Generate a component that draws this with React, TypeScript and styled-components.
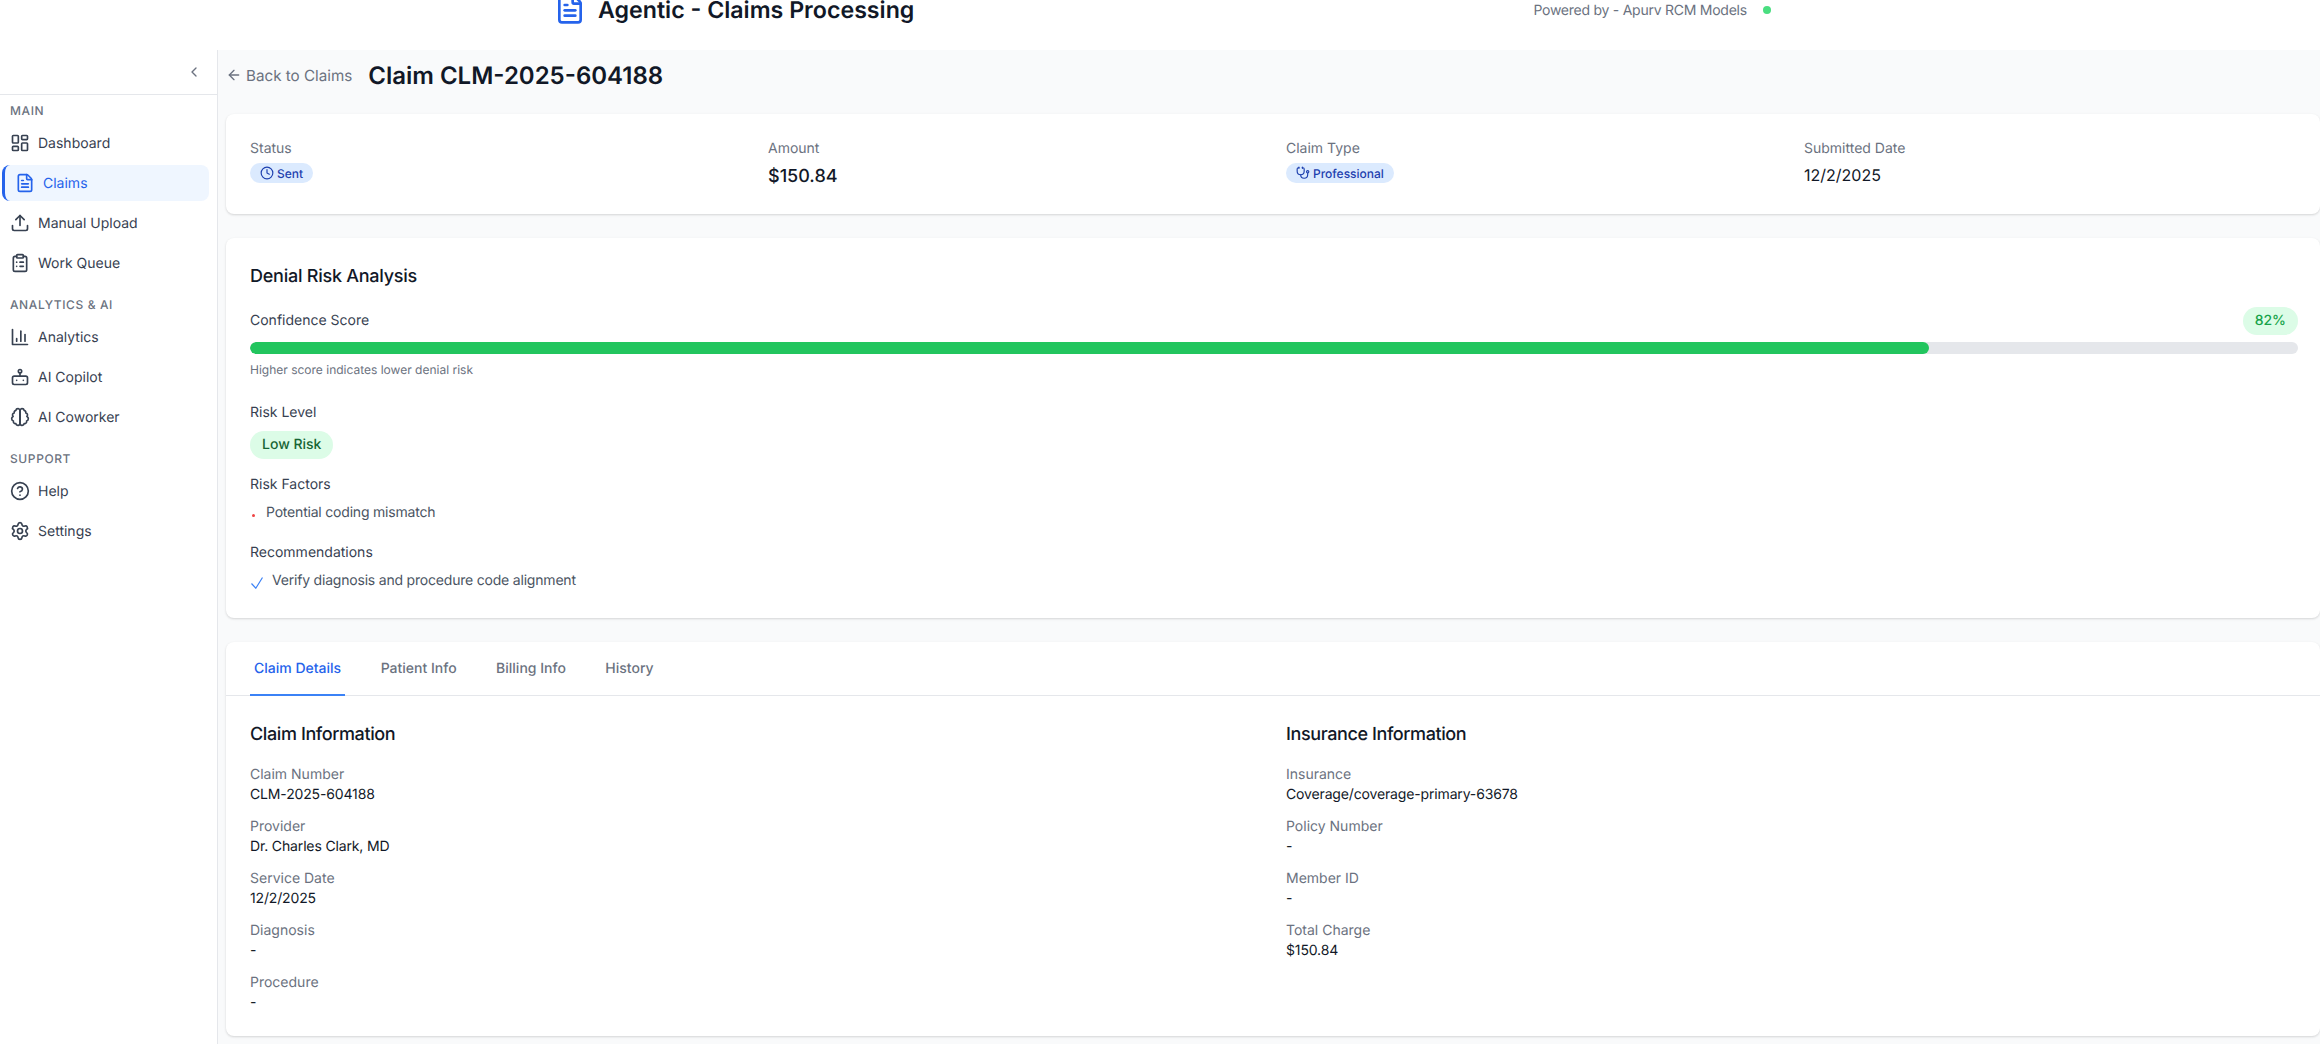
import styled, { createGlobalStyle } from 'styled-components';
import {
  ArrowLeft,
  ChevronLeft,
  CircleHelp,
  ClipboardList,
  Clock,
  FileText,
  LayoutDashboard,
  Settings,
  Stethoscope,
  Upload,
} from 'lucide-react';

const GlobalStyle = createGlobalStyle`
  * {
    box-sizing: border-box;
  }

  html,
  body {
    margin: 0;
    height: 100%;
    overflow: hidden;
    background: #fff;
    font-family: Inter, 'Liberation Sans', sans-serif;
    color: #111827;
    text-rendering: geometricPrecision;
  }
`;

const Page = styled.div`
  display: flex;
  flex-direction: column;
  height: 1044px;
  width: 2320px;
  overflow: hidden;
`;

const Header = styled.header`
  background: #fff;
  display: flex;
  flex-shrink: 0;
  height: 50px;
  overflow: hidden;
  padding-left: 554px;
`;

const Brand = styled.div`
  align-items: center;
  color: #2563eb;
  display: flex;
  gap: 12px;
  height: 44px;
  margin-top: -13px;
`;

const BrandTitle = styled.h1`
  color: #111827;
  font-size: 23.2px;
  font-weight: 600;
  line-height: 18px;
  margin: 0;
  padding-top: 2px;
`;

const Powered = styled.div`
  align-items: center;
  color: #6b7280;
  display: flex;
  font-size: 14px;
  gap: 16px;
  height: 20px;
  letter-spacing: -0.25px;
  margin-left: 619px;
`;

const StatusDot = styled.span`
  background: #4ade80;
  border-radius: 50%;
  height: 8px;
  width: 8px;
`;

const Body = styled.div`
  display: flex;
  flex: 1;
  min-height: 0;
`;

const Sidebar = styled.aside`
  background: #fff;
  border-right: 1px solid #e5e7eb;
  flex-shrink: 0;
  width: 218px;
`;

const CollapseRow = styled.div`
  align-items: center;
  border-bottom: 1px solid #e5e7eb;
  color: #6b7280;
  display: flex;
  height: 45px;
  justify-content: flex-end;
  padding-right: 15px;
`;

const NavSection = styled.div`
  padding: 8px 0 4px;
`;

const SectionTitle = styled.div`
  color: #6b7280;
  font-size: 12px;
  font-weight: 500;
  letter-spacing: 0.6px;
  line-height: 16px;
  margin-bottom: 6px;
  padding: 0 10px;
`;

const NavItem = styled.a<{ $active?: boolean }>`
  align-items: center;
  background: ${({ $active }) => ($active ? '#eff6ff' : 'transparent')};
  border-left: ${({ $active }) => ($active ? '3px solid #2563eb' : '0')};
  border-radius: 8px;
  color: ${({ $active }) => ($active ? '#2563eb' : '#374151')};
  display: flex;
  font-size: 14px;
  gap: 8px;
  height: 36px;
  margin: 0 8px 4px ${({ $active }) => ($active ? '2px' : '0')};
  padding-left: 10px;
`;

const Main = styled.main`
  background: #f9fafb;
  flex: 1;
  min-width: 0;
  padding-left: 8px;
`;

const TitleRow = styled.div`
  align-items: center;
  display: flex;
  gap: 16px;
  height: 50px;
  margin-bottom: 14px;
`;

const BackLink = styled.a`
  align-items: center;
  color: #6b7280;
  display: flex;
  font-size: 15.2px;
  gap: 4px;
`;

const ClaimTitle = styled.h2`
  color: #111827;
  font-size: 24px;
  font-weight: 600;
  margin: 0;
`;

const Card = styled.section`
  background: #fff;
  border-radius: 8px;
  box-shadow: 0 1px 3px rgba(0, 0, 0, 0.1), 0 1px 2px rgba(0, 0, 0, 0.06);
  margin-bottom: 24px;
`;

const SummaryCard = styled(Card)`
  display: grid;
  gap: 24px;
  grid-template-columns: repeat(4, 1fr);
  height: 100px;
  padding: 25px 22px 23px 24px;
`;

const SummaryLabel = styled.div`
  color: #6b7280;
  font-size: 14px;
  line-height: 20px;
`;

const SummaryValue = styled.div<{ $large?: boolean }>`
  color: #111827;
  font-size: ${({ $large }) => ($large ? '18px' : '16px')};
  font-weight: ${({ $large }) => ($large ? 500 : 400)};
  line-height: ${({ $large }) => ($large ? '28px' : '24px')};
  margin-top: 4px;
`;

const Pill = styled.span`
  align-items: center;
  background: #dbeafe;
  border-radius: 10px;
  color: #1e40af;
  display: inline-flex;
  font-size: 12px;
  font-weight: 500;
  gap: 3px;
  height: 20px;
  margin-top: 4px;
  padding: 0 10px;
`;

const RiskCard = styled(Card)`
  height: 380px;
  padding: 25px 22px 24px 24px;
`;

const CardTitle = styled.h3`
  color: #111827;
  font-size: 18px;
  font-weight: 500;
  letter-spacing: -0.25px;
  line-height: 28px;
  margin: 0 0 16px;
`;

const ScoreRow = styled.div`
  align-items: center;
  display: flex;
  justify-content: space-between;
`;

const FieldHeading = styled.div`
  color: #374151;
  font-size: 14px;
  line-height: 20px;
`;

const ScoreBadge = styled.span`
  background: #dcfce7;
  border-radius: 14px;
  color: #16a34a;
  font-size: 14px;
  font-weight: 500;
  line-height: 28px;
  padding: 0 12px;
`;

const Track = styled.div`
  background: #e5e7eb;
  border-radius: 6px;
  height: 12px;
  margin-top: 7px;
  overflow: hidden;
`;

const Fill = styled.div`
  background: #22c55e;
  border-radius: 6px;
  height: 100%;
`;

const Hint = styled.div`
  color: #6b7280;
  font-size: 12px;
  line-height: 16px;
  margin: 8px 0 25px;
`;

const RiskBadge = styled.span`
  background: #dcfce7;
  border-radius: 14px;
  color: #166534;
  display: inline-block;
  font-size: 14px;
  font-weight: 500;
  line-height: 28px;
  margin: 8px 0 16px;
  padding: 0 12px;
`;

const ListRow = styled.div`
  align-items: center;
  color: #4b5563;
  display: flex;
  font-size: 14px;
  letter-spacing: -0.2px;
  line-height: 20px;
  margin: 8px 0 20px;
`;

const Bullet = styled.span`
  background: #ef4444;
  border-radius: 50%;
  height: 3px;
  margin: 5px 11px 0 2px;
  width: 3px;
`;

const CheckMark = styled.svg`
  color: #3b82f6;
  flex-shrink: 0;
  margin: 4px 9px 0 1px;
`;

const TabBar = styled.div`
  border-bottom: 1px solid #e5e7eb;
  display: flex;
  gap: 31.5px;
  height: 54px;
  padding-left: 24px;
`;

const Tab = styled.div<{ $active?: boolean }>`
  align-items: center;
  border-bottom: 2px solid ${({ $active }) => ($active ? '#3b82f6' : 'transparent')};
  color: ${({ $active }) => ($active ? '#2563eb' : '#6b7280')};
  display: flex;
  font-size: 14px;
  font-weight: 500;
  height: 54px;
  padding: 0 4px;
`;

const DetailGrid = styled.div`
  display: grid;
  gap: 24px;
  grid-template-columns: 1fr 1fr;
  padding: 25px 22px 23px 24px;
`;

const SectionHeading = styled.h4`
  color: #111827;
  font-size: 18px;
  font-weight: 500;
  letter-spacing: -0.4px;
  line-height: 28px;
  margin: 0 0 16px;
`;

const Field = styled.div`
  margin-bottom: 12px;

  &:last-child {
    margin-bottom: 0;
  }
`;

const FieldLabel = styled.div`
  color: #6b7280;
  font-size: 14px;
  line-height: 20px;
`;

const FieldValue = styled.div`
  color: #111827;
  font-size: 14px;
  letter-spacing: -0.15px;
  line-height: 20px;
`;

const navIconProps = {
  width: 20,
  height: 20,
  viewBox: '0 0 24 24',
  fill: 'none',
  stroke: 'currentColor',
  strokeWidth: 2,
  strokeLinecap: 'round' as const,
  strokeLinejoin: 'round' as const,
};

const AnalyticsIcon = () => (
  <svg {...navIconProps}>
    <path d="M3 3v18h18" />
    <path d="M18 17V9" />
    <path d="M13 17V5" />
    <path d="M8 17v-3" />
  </svg>
);

const CopilotIcon = () => (
  <svg {...navIconProps}>
    <rect x="3" y="11" width="18" height="10" rx="2" />
    <circle cx="12" cy="5" r="2" />
    <path d="M12 7v4" />
    <path d="M8 16h.01" />
    <path d="M16 16h.01" />
  </svg>
);

const CoworkerIcon = () => (
  <svg {...navIconProps}>
    <path d="M9.5 2A2.5 2.5 0 0 1 12 4.5v15a2.5 2.5 0 0 1-4.96.44 2.5 2.5 0 0 1-2.96-3.08 3 3 0 0 1-.34-5.58 2.5 2.5 0 0 1 1.32-4.24 2.5 2.5 0 0 1 1.98-3A2.5 2.5 0 0 1 9.5 2Z" />
    <path d="M14.5 2A2.5 2.5 0 0 0 12 4.5v15a2.5 2.5 0 0 0 4.96.44 2.5 2.5 0 0 0 2.96-3.08 3 3 0 0 0 .34-5.58 2.5 2.5 0 0 0-1.32-4.24 2.5 2.5 0 0 0-1.98-3A2.5 2.5 0 0 0 14.5 2Z" />
  </svg>
);

const claimFields = [
  ['Claim Number', 'CLM-2025-604188'],
  ['Provider', 'Dr. Charles Clark, MD'],
  ['Service Date', '12/2/2025'],
  ['Diagnosis', '-'],
  ['Procedure', '-'],
];

const insuranceFields = [
  ['Insurance', 'Coverage/coverage-primary-63678'],
  ['Policy Number', '-'],
  ['Member ID', '-'],
  ['Total Charge', '$150.84'],
];

const App = () => {
  return (
    <Page>
      <GlobalStyle />
      <Header>
        <Brand>
          <FileText size={32} />
          <BrandTitle>Agentic - Claims Processing</BrandTitle>
        </Brand>
        <Powered>
          Powered by - Apurv RCM Models
          <StatusDot />
        </Powered>
      </Header>
      <Body>
        <Sidebar>
          <CollapseRow>
            <ChevronLeft size={16} />
          </CollapseRow>
          <NavSection>
            <SectionTitle>MAIN</SectionTitle>
            <NavItem><LayoutDashboard size={20} />Dashboard</NavItem>
            <NavItem $active><FileText size={20} />Claims</NavItem>
            <NavItem><Upload size={20} />Manual Upload</NavItem>
            <NavItem><ClipboardList size={20} />Work Queue</NavItem>
          </NavSection>
          <NavSection>
            <SectionTitle>ANALYTICS &amp; AI</SectionTitle>
            <NavItem><AnalyticsIcon />Analytics</NavItem>
            <NavItem><CopilotIcon />AI Copilot</NavItem>
            <NavItem><CoworkerIcon />AI Coworker</NavItem>
          </NavSection>
          <NavSection>
            <SectionTitle>SUPPORT</SectionTitle>
            <NavItem><CircleHelp size={20} />Help</NavItem>
            <NavItem><Settings size={20} />Settings</NavItem>
          </NavSection>
        </Sidebar>
        <Main>
          <TitleRow>
            <BackLink><ArrowLeft size={16} />Back to Claims</BackLink>
            <ClaimTitle>Claim CLM-2025-604188</ClaimTitle>
          </TitleRow>
          <SummaryCard>
            <div>
              <SummaryLabel>Status</SummaryLabel>
              <Pill><Clock size={14} />Sent</Pill>
            </div>
            <div>
              <SummaryLabel>Amount</SummaryLabel>
              <SummaryValue $large>$150.84</SummaryValue>
            </div>
            <div>
              <SummaryLabel>Claim Type</SummaryLabel>
              <Pill><Stethoscope size={14} />Professional</Pill>
            </div>
            <div>
              <SummaryLabel>Submitted Date</SummaryLabel>
              <SummaryValue>12/2/2025</SummaryValue>
            </div>
          </SummaryCard>
          <RiskCard>
            <CardTitle>Denial Risk Analysis</CardTitle>
            <ScoreRow>
              <FieldHeading>Confidence Score</FieldHeading>
              <ScoreBadge>82%</ScoreBadge>
            </ScoreRow>
            <Track>
              <Fill style={{ width: '82%' }} />
            </Track>
            <Hint>Higher score indicates lower denial risk</Hint>
            <FieldHeading>Risk Level</FieldHeading>
            <RiskBadge>Low Risk</RiskBadge>
            <FieldHeading>Risk Factors</FieldHeading>
            <ListRow><Bullet />Potential coding mismatch</ListRow>
            <FieldHeading>Recommendations</FieldHeading>
            <ListRow>
              <CheckMark width="12" height="12" viewBox="0 0 12 12" fill="none" stroke="currentColor" strokeWidth="1.2">
                <path d="M0.5 6.5 L4.8 11.2 L11.5 0.5" />
              </CheckMark>
              Verify diagnosis and procedure code alignment
            </ListRow>
          </RiskCard>
          <Card>
            <TabBar>
              <Tab $active>Claim Details</Tab>
              <Tab>Patient Info</Tab>
              <Tab>Billing Info</Tab>
              <Tab>History</Tab>
            </TabBar>
            <DetailGrid>
              <div>
                <SectionHeading>Claim Information</SectionHeading>
                {claimFields.map(([label, value]) => (
                  <Field key={label}>
                    <FieldLabel>{label}</FieldLabel>
                    <FieldValue>{value}</FieldValue>
                  </Field>
                ))}
              </div>
              <div>
                <SectionHeading>Insurance Information</SectionHeading>
                {insuranceFields.map(([label, value]) => (
                  <Field key={label}>
                    <FieldLabel>{label}</FieldLabel>
                    <FieldValue>{value}</FieldValue>
                  </Field>
                ))}
              </div>
            </DetailGrid>
          </Card>
        </Main>
      </Body>
    </Page>
  );
};

export default App;
